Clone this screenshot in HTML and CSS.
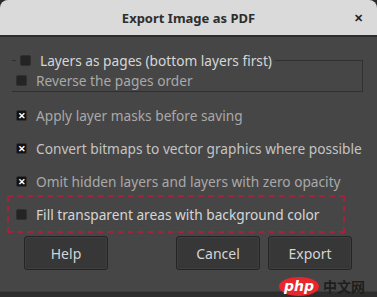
FILE: index.html
```html
<!DOCTYPE html>
<html lang="en">
  <head>
    <meta charset="UTF-8" />
    <meta name="viewport" content="width=device-width, initial-scale=1.0" />
    <title>Export Image as PDF</title>
    <link rel="stylesheet" href="styles.css">
  </head>
  <body>
    <div class="dialog">
      <header class="titlebar">
        <span class="title">Export Image as PDF</span>
        <span class="close">&#x2715;</span>
      </header>

      <main class="content">
        <fieldset class="frame">
          <legend>
            <label class="check bright"><span class="box"></span>Layers as pages (bottom layers first)</label>
          </legend>
          <label class="check dim"><span class="box"></span>Reverse the pages order</label>
        </fieldset>

        <label class="check dim"><span class="box checked">&#x2715;</span>Apply layer masks before saving</label>
        <label class="check"><span class="box checked">&#x2715;</span>Convert bitmaps to vector graphics where possible</label>
        <label class="check dim"><span class="box checked">&#x2715;</span>Omit hidden layers and layers with zero opacity</label>
        <label class="check bright fill"><span class="box"></span>Fill transparent areas with background color</label>
      </main>

      <div class="actions">
        <button class="btn">Help</button>
        <div class="spacer"></div>
        <button class="btn">Cancel</button>
        <button class="btn">Export</button>
      </div>

      <div class="bottom"></div>
    </div>

    <div class="watermark">
      <span class="php">php</span>
      <span class="cn">中文网</span>
    </div>
  </body>
</html>
```

FILE: styles.css
```css
body {
  margin: 0;
  background-color: #2a2a2a;
  font-family: "Noto Sans", "Open Sans", sans-serif;
  font-size: 13.7px;
  width: 377px;
  height: 297px;
  overflow: hidden;
  position: relative;
}

.dialog {
  display: flex;
  flex-direction: column;
  height: 297px;
  background-color: #464646;
  border-radius: 8px 8px 0 0;
  overflow: hidden;
}

.titlebar {
  height: 35px;
  flex-shrink: 0;
  display: flex;
  align-items: center;
  justify-content: center;
  position: relative;
  background-color: #dadada;
  border-bottom: 2px solid #2c2c2c;
  color: #2e2e2e;
}

.title {
  font-weight: bold;
  font-size: 13px;
}

.close {
  position: absolute;
  right: 14px;
  top: 10px;
  font-size: 11px;
  font-weight: bold;
  color: #222;
}

.content {
  display: flex;
  flex-direction: column;
  gap: 13px;
  padding: 13px 14px 0 12px;
}

.frame {
  margin: 0;
  padding: 0 0 1px 4px;
  border: 1px solid #303030;
  border-left: none;
  min-width: 0;
}

.frame legend {
  padding: 0 3px 0 4px;
  margin: 0;
}

.check {
  display: flex;
  align-items: center;
  height: 20px;
  color: #c4c4c4;
  white-space: nowrap;
}

.check.dim {
  color: #a9a9a9;
}

.check.bright {
  color: #d6d6d6;
}

.content > .check {
  margin-left: 4px;
}

.box {
  width: 11px;
  height: 11px;
  margin-right: 9px;
  border-radius: 2px;
  background-color: #242424;
  border: 1px solid #303030;
  box-sizing: border-box;
  display: flex;
  align-items: center;
  justify-content: center;
  flex-shrink: 0;
}

.box.checked {
  background-color: #111;
  color: #fff;
  font-size: 9px;
  font-weight: bold;
  line-height: 1;
}

.fill {
  width: 320px;
  outline: 2px dashed #a3233e;
  outline-offset: 7px;
}

.actions {
  display: flex;
  gap: 8px;
  padding: 12px 25px 0 24px;
}

.spacer {
  flex: 1;
}

.btn {
  width: 84px;
  height: 34px;
  font-family: inherit;
  font-size: 14px;
  color: #d4d4d4;
  background-color: #373737;
  border: 1px solid #242424;
  border-radius: 3px;
  box-shadow: inset 0 0 0 1px #3f3f3f;
}

.bottom {
  margin-top: auto;
  height: 5px;
  border-top: 1px solid #3a3a3a;
  background-color: #2d2d2d;
}

.watermark {
  position: absolute;
  right: 12px;
  bottom: 1px;
  display: flex;
  align-items: center;
  gap: 4px;
}

.php {
  background-color: #e8262b;
  color: #fff;
  font-family: "DejaVu Sans", sans-serif;
  font-style: italic;
  font-weight: bold;
  font-size: 14px;
  padding: 0 5px;
  border-radius: 50%;
  line-height: 19px;
}

.cn {
  font-family: "Noto Sans CJK SC", sans-serif;
  font-weight: bold;
  font-size: 14px;
  color: #1e1e1e;
}
```
